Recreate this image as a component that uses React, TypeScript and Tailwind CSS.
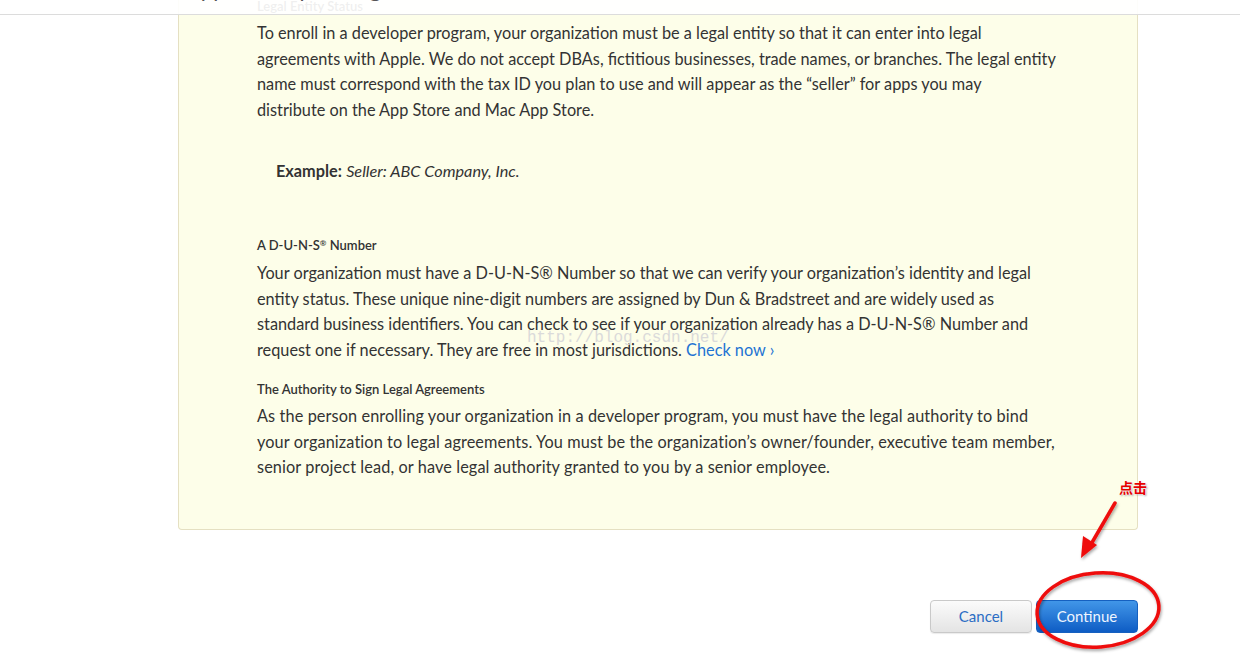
export default function App() {
  return (
    <div className="relative h-[658px] w-[1240px] overflow-hidden bg-white font-['Lato','Open_Sans',sans-serif] text-[#333333]">
      {/* card, scrolled so its top sits under the sticky bar */}
      <div className="ml-[178px] w-[960px] rounded-b-[4px] border border-t-0 border-[#e5e0c2] bg-[#fdfee9] pl-[78px] pr-[40px] pb-[49px]">
        <h4 className="-mt-[2px] text-[13px] leading-[16px] font-semibold text-[#333]">Legal Entity Status</h4>
        <p className="mt-[6px] whitespace-nowrap text-[16.3px] leading-[25.5px]">
          To enroll in a developer program, your organization must be a legal entity so that it can enter into legal
          <br />
          agreements with Apple. We do not accept DBAs, fictitious businesses, trade names, or branches. The legal entity
          <br />
          name must correspond with the tax ID you plan to use and will appear as the “seller” for apps you may
          <br />
          distribute on the App Store and Mac App Store.
        </p>
        <p className="mt-[36px] pl-[19px] text-[16.3px] leading-[25px]">
          <span className="font-bold">Example:</span> <span className="italic">Seller: ABC Company, Inc.</span>
        </p>
        <h4 className="mt-[54px] text-[13px] leading-[16px] font-semibold">
          A D-U-N-S<sup className="text-[8px]">®</sup> Number
        </h4>
        <p className="mt-[7px] whitespace-nowrap text-[16.3px] leading-[25.5px]">
          Your organization must have a D-U-N-S® Number so that we can verify your organization’s identity and legal
          <br />
          entity status. These unique nine-digit numbers are assigned by Dun &amp; Bradstreet and are widely used as
          <br />
          standard business identifiers. You can check to see if your organization already has a D-U-N-S® Number and
          <br />
          request one if necessary. They are free in most jurisdictions.{" "}
          <a className="text-[#1f74d3]">Check now ›</a>
        </p>
        <h4 className="mt-[19px] text-[13px] leading-[16px] font-semibold">The Authority to Sign Legal Agreements</h4>
        <p className="mt-[6px] whitespace-nowrap text-[16.3px] leading-[25.5px] tracking-[0.1px]">
          As the person enrolling your organization in a developer program, you must have the legal authority to bind
          <br />
          your organization to legal agreements. You must be the organization’s owner/founder, executive team member,
          <br />
          senior project lead, or have legal authority granted to you by a senior employee.
        </p>
      </div>

      <div className="mt-[70px] ml-[930px] flex gap-[4px]">
        <button className="h-[33px] w-[102px] rounded-[4px] border border-[#c9c9c9] bg-gradient-to-b from-[#fbfbfb] to-[#e4e4e4] text-[15px] text-[#2b6dc4] shadow-[0_1px_1px_rgba(0,0,0,0.08)]">
          Cancel
        </button>
        <button className="h-[33px] w-[102px] rounded-[4px] border border-[#1560c0] bg-gradient-to-b from-[#4196e8] to-[#0d5cc4] text-[15px] text-[#eef5ff]">
          Continue
        </button>
      </div>

      {/* sticky header bar */}
      <div className="absolute left-0 top-0 h-[15px] w-full overflow-hidden border-b border-[#dcdcdc] bg-white/92">
        <div className="absolute left-[186px] -top-[24px] text-[22px] leading-[26px] text-[#555]">App Developer Program Enrollment</div>
      </div>

      {/* watermark */}
      <div className="pointer-events-none absolute left-[527px] top-[328px] font-['Liberation_Mono',monospace] text-[16px] leading-[20px] text-[#dadada]">
        http://blog.csdn.net/
      </div>

      {/* annotation */}
      <svg className="pointer-events-none absolute left-0 top-0" width="1240" height="658">
        <defs>
          <filter id="sh" x="-20%" y="-20%" width="140%" height="140%">
            <feDropShadow dx="1" dy="2" stdDeviation="1.5" floodColor="#000" floodOpacity="0.35" />
          </filter>
        </defs>
        <g filter="url(#sh)">
          <ellipse cx="1098" cy="610" rx="61" ry="37" fill="none" stroke="#ee0a0a" strokeWidth="3.5" transform="rotate(-4 1098 610)" />
          <line x1="1115" y1="503" x2="1090" y2="546" stroke="#ee0a0a" strokeWidth="3.5" strokeLinecap="round" />
          <polygon points="1081,558 1083,536 1097,545" fill="#ee0a0a" />
        </g>
      </svg>
      <div
        className="absolute left-[1119px] top-[478px] font-['Noto_Sans_CJK_SC',sans-serif] text-[14px] leading-[18px] font-bold text-[#e60000]"
        style={{ textShadow: "0 0 2px #fff, 0 0 2px #fff, 1px 1px 2px rgba(0,0,0,0.4)" }}
      >
        点击
      </div>
    </div>
  );
}
